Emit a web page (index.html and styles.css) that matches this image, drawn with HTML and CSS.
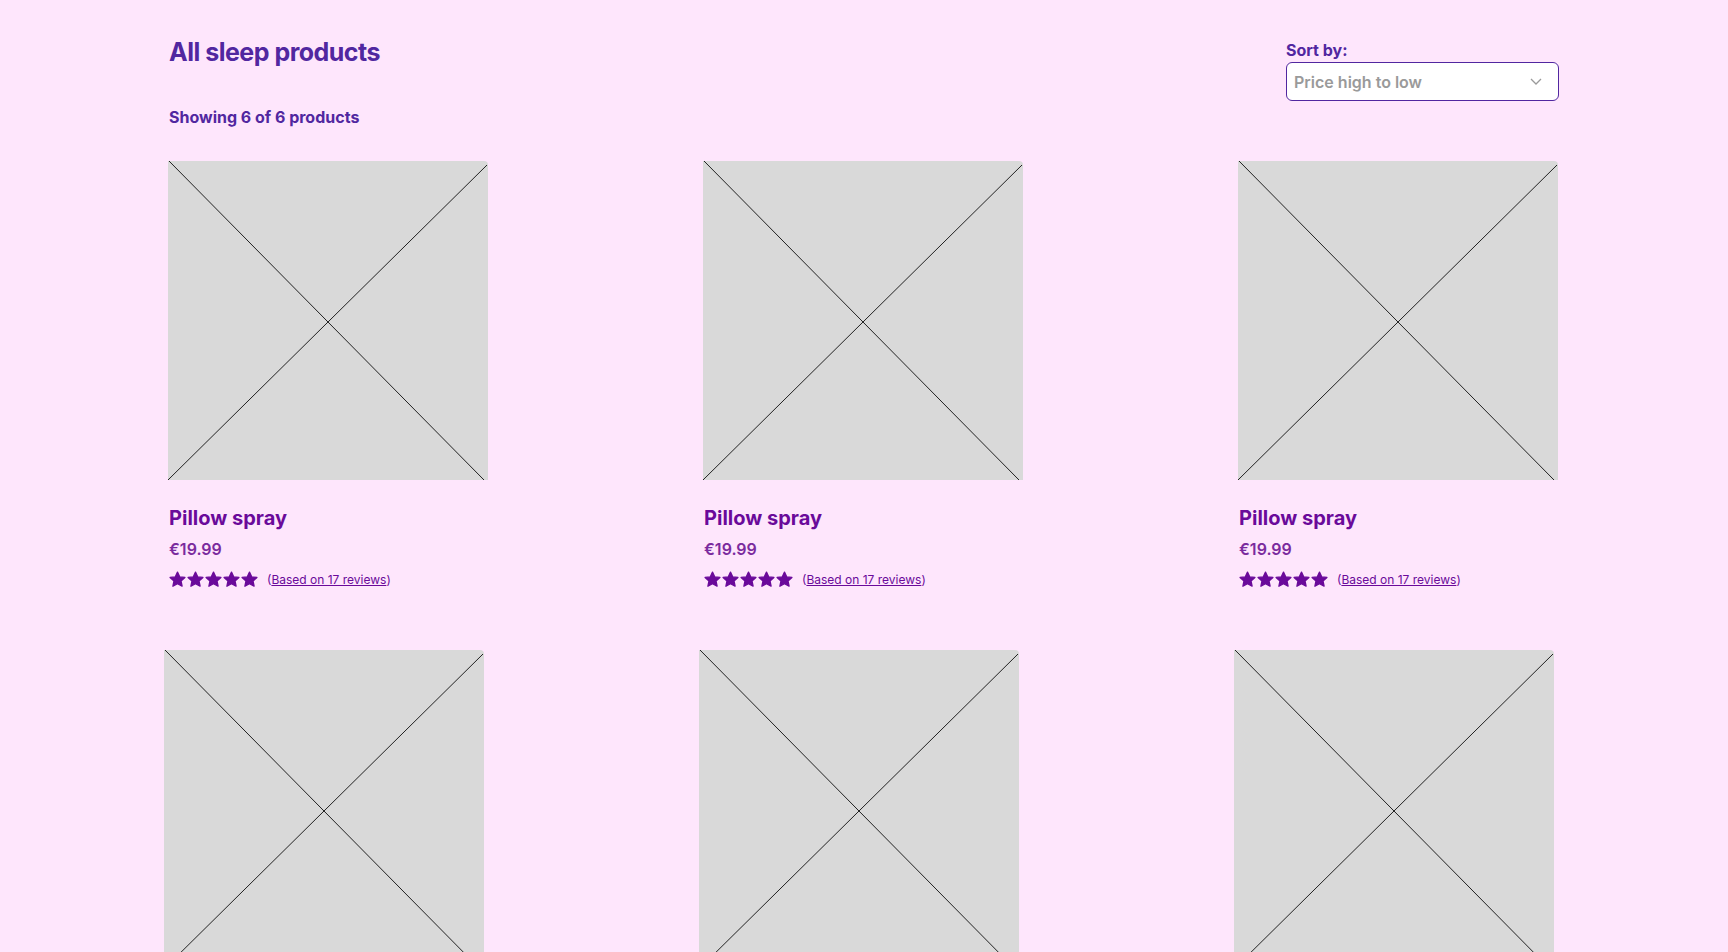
FILE: index.html
```html
<!DOCTYPE html>
<html>
    <head>
        <title>All sleep products</title>
        <link rel="stylesheet" href="styles.css">
    </head>
    <body>
        <div class="page">

            <!-- Header -->
            <div class="header">
                <h1 class="title">All sleep products</h1>
                <div class="sort">
                    <label class="sort-label">Sort by:</label>
                    <div class="select">
                        <span>Price high to low</span>
                        <svg class="chevron" width="12" height="7" viewBox="0 0 12 7">
                            <polyline points="1,1 6,6 11,1" fill="none" stroke="#9a9a9a" stroke-width="1.3"/>
                        </svg>
                    </div>
                </div>
            </div>
            <p class="count">Showing 6 of 6 products</p>

            <!-- Produits -->
            <div class="grid" id="grid"></div>
        </div>

        <script>
            const star = '<svg width="17" height="17" viewBox="0 0 24 24"><polygon points="12,1.5 15.1,8.3 22.5,9.1 17,14.1 18.5,21.5 12,17.8 5.5,21.5 7,14.1 1.5,9.1 8.9,8.3" fill="#6a0a9a" stroke="#6a0a9a" stroke-width="1.8" stroke-linejoin="round"/></svg>';

            function card(shift) {
                let stars = '';
                for (let i = 0; i < 5; i++) stars += star;
                return '<div class="card' + (shift ? ' shift' : '') + '">'
                    + '<div class="thumb"><svg viewBox="0 0 320 319" preserveAspectRatio="none">'
                    + '<line x1="1" y1="0" x2="316" y2="319" stroke="#222" stroke-width="1"/>'
                    + '<line x1="319" y1="4" x2="0" y2="319" stroke="#222" stroke-width="1"/>'
                    + '</svg></div>'
                    + '<h2 class="name">Pillow spray</h2>'
                    + '<p class="price">€19.99</p>'
                    + '<div class="rating"><span class="stars">' + stars + '</span>'
                    + '<span class="reviews">(<a href="#">Based on 17 reviews</a>)</span></div>'
                    + '</div>';
            }

            let html = '';
            for (let i = 0; i < 6; i++) html += card(i >= 3);
            document.getElementById('grid').innerHTML = html;
        </script>
    </body>
</html>
```

FILE: styles.css
```css
body {
    margin: 0;
    background-color: #fee6fc;
    font-family: Inter, "Noto Sans", sans-serif;
}

.page {
    width: 1391px;
    margin-left: 168px;
    padding-top: 36px;
}

.header {
    display: flex;
    justify-content: space-between;
    align-items: flex-start;
}

.title {
    margin: 0 0 0 1px;
    font-size: 25px;
    font-weight: 700;
    line-height: 32px;
    color: #5127a0;
    letter-spacing: -0.5px;
}

.sort {
    margin-top: 5px;
    width: 273px;
}

.sort-label {
    display: block;
    font-size: 16px;
    font-weight: 700;
    line-height: 19px;
    color: #5127a0;
    margin-bottom: 2px;
}

.select {
    display: flex;
    justify-content: space-between;
    align-items: center;
    height: 37px;
    padding: 0 16px 0 7px;
    border: 1px solid #5127a0;
    border-radius: 6px;
    background-color: white;
    font-size: 16px;
    font-weight: 600;
    color: #9a9a9a;
}

.count {
    margin: 7px 0 0 1px;
    font-size: 16px;
    font-weight: 700;
    line-height: 19px;
    color: #5127a0;
}

.grid {
    display: grid;
    grid-template-columns: repeat(3, 320px);
    column-gap: 215px;
    row-gap: 62px;
    margin-top: 34px;
}

.card.shift {
    margin-left: -4px;
}

.thumb {
    width: 320px;
    height: 319px;
    background-color: #d9d9d9;
    border-top-right-radius: 4px;
}

.thumb svg {
    display: block;
    width: 100%;
    height: 100%;
}

.name {
    margin: 26px 0 0 1px;
    font-size: 20px;
    font-weight: 700;
    line-height: 24px;
    color: #6a0a9a;
}

.price {
    margin: 10px 0 0 1px;
    font-size: 16px;
    font-weight: 600;
    line-height: 19px;
    color: #7b2b9e;
}

.rating {
    display: flex;
    align-items: center;
    margin: 12px 0 0 1px;
    height: 17px;
}

.stars {
    display: flex;
    gap: 1px;
}

.stars svg {
    display: block;
}

.reviews {
    margin-left: 9px;
    font-size: 12px;
    color: #6a0a9a;
}

.reviews a {
    color: #6a0a9a;
}
```
